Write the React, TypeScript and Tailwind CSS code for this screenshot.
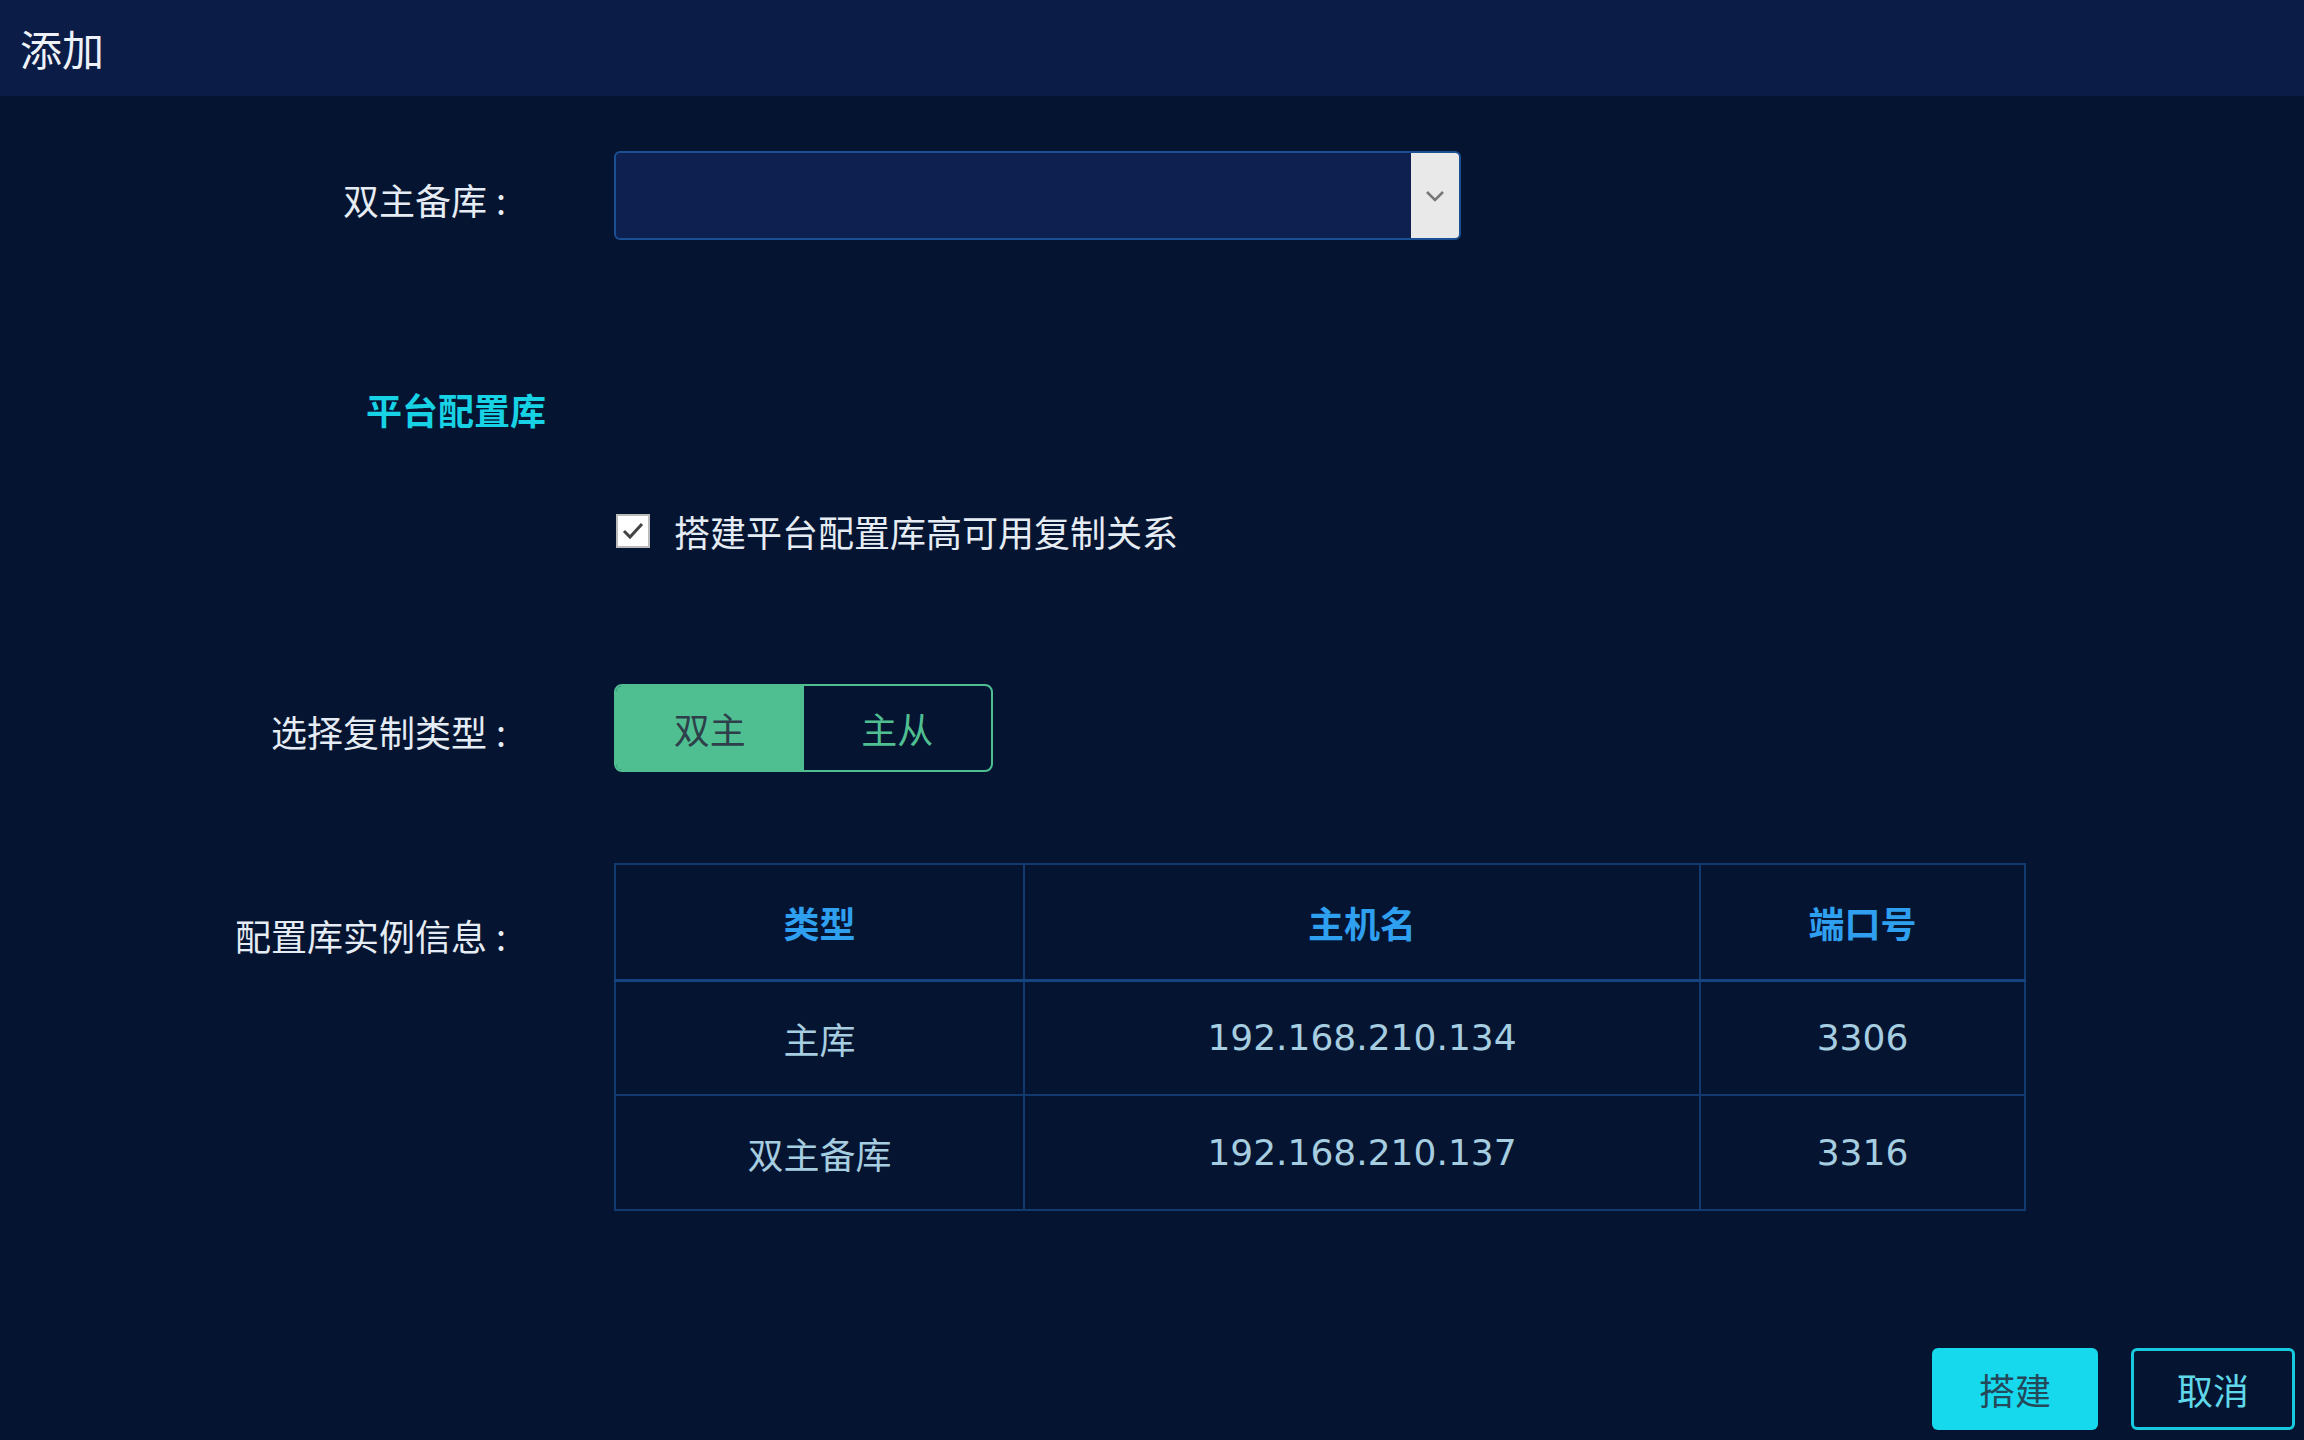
import React, { useState } from "react";

// 配置库实例
const instances = [
  { type: "主库", host: "192.168.210.134", port: "3306" },
  { type: "双主备库", host: "192.168.210.137", port: "3316" },
];

const FONT = "font-['Noto_Sans_CJK_SC',sans-serif]";

const FormRow = ({ label, children, alignTop = false }: { label: string; children: React.ReactNode; alignTop?: boolean }) => (
  <div className={`flex ${alignTop ? "items-start" : "items-center"}`}>
    <div className={`w-[506px] shrink-0 text-right text-[36px] leading-[50px] text-[#e6ecf4] ${alignTop ? "pt-[47px]" : "pt-[6px]"}`}>
      {label}
      <span className="ml-[9px]">:</span>
    </div>
    <div className="ml-[108px]">{children}</div>
  </div>
);

const App = () => {
  const [mode, setMode] = useState<"dual" | "ms">("dual");
  const [checked, setChecked] = useState(true);

  return (
    <div className={`w-full h-screen overflow-hidden bg-[#051531] flex flex-col ${FONT}`}>
      {/* 标题栏 */}
      <div className="h-[96px] bg-[#0b1c46] flex items-center px-[20px] shrink-0">
        <span className="text-[42px] text-[#eef2f8] leading-none">添加</span>
      </div>

      <div className="flex flex-col">
        {/* 双主备库 */}
        <div className="mt-[55px]">
          <FormRow label="双主备库">
            <div className="w-[847px] h-[89px] rounded-[6px] border-2 border-[#1b4f93] bg-[#0d2050] flex justify-end overflow-hidden">
              <div className="w-[48px] h-full bg-[#e9e9e9] flex items-center justify-center">
                <svg width="22" height="14" viewBox="0 0 22 14" fill="none">
                  <path d="M3 3 L11 11 L19 3" stroke="#777" strokeWidth="2.5" />
                </svg>
              </div>
            </div>
          </FormRow>
        </div>

        {/* 平台配置库 */}
        <div className="mt-[144px] pl-[366px] text-[36px] leading-[50px] font-bold text-[#17d2e4]">平台配置库</div>

        <div className="mt-[72px] pl-[616px] flex items-center">
          <button
            onClick={() => setChecked(!checked)}
            className="w-[34px] h-[34px] bg-white border-2 border-[#bbb] flex items-center justify-center"
          >
            {checked && (
              <svg width="24" height="20" viewBox="0 0 24 20" fill="none">
                <path d="M3 10 L9 16 L21 3" stroke="#444" strokeWidth="3" />
              </svg>
            )}
          </button>
          <span className="ml-[24px] text-[36px] leading-[50px] text-[#e6ecf4]">搭建平台配置库高可用复制关系</span>
        </div>

        {/* 复制类型 */}
        <div className="mt-[128px]">
          <FormRow label="选择复制类型">
            <div className="flex w-[379px] h-[88px] rounded-[8px] border-2 border-[#4fbf92] overflow-hidden">
              <button
                onClick={() => setMode("dual")}
                className={`flex-1 text-[36px] ${mode === "dual" ? "bg-[#4fbf92] text-[#2e3f4a]" : "text-[#4fbf92]"}`}
              >
                双主
              </button>
              <button
                onClick={() => setMode("ms")}
                className={`flex-1 text-[36px] ${mode === "ms" ? "bg-[#4fbf92] text-[#2e3f4a]" : "text-[#4fbf92]"}`}
              >
                主从
              </button>
            </div>
          </FormRow>
        </div>

        {/* 实例信息表 */}
        <div className="mt-[91px]">
          <FormRow label="配置库实例信息" alignTop>
            <table className="w-[1412px] border-collapse border-2 border-[#123a6e] text-[36px]">
              <thead>
                <tr className="h-[116px] border-b-[3px] border-[#16447e]">
                  <th className="w-[409px] border-r-2 border-[#123a6e] font-bold text-[#2f9ff0]">类型</th>
                  <th className="w-[676px] border-r-2 border-[#123a6e] font-bold text-[#2f9ff0]">主机名</th>
                  <th className="font-bold text-[#2f9ff0]">端口号</th>
                </tr>
              </thead>
              <tbody>
                {instances.map((row) => (
                  <tr key={row.host} className="h-[115px] border-b-2 border-[#123a6e] text-[#a6cde0]">
                    <td className="border-r-2 border-[#123a6e] text-center">{row.type}</td>
                    <td className="border-r-2 border-[#123a6e] text-center font-['DejaVu_Sans',sans-serif] text-[36px]">{row.host}</td>
                    <td className="text-center font-['DejaVu_Sans',sans-serif] text-[36px]">{row.port}</td>
                  </tr>
                ))}
              </tbody>
            </table>
          </FormRow>
        </div>

        {/* 底部按钮 */}
        <div className="mt-[137px] flex justify-end gap-[33px] pr-[9px]">
          <button className="w-[166px] h-[82px] rounded-[6px] bg-[#17d9ee] text-[36px] text-[#24495a]">搭建</button>
          <button className="w-[164px] h-[82px] rounded-[6px] border-[3px] border-[#17c9dd] text-[36px] text-[#5fd8ea]">取消</button>
        </div>
      </div>
    </div>
  );
};

export default App;
